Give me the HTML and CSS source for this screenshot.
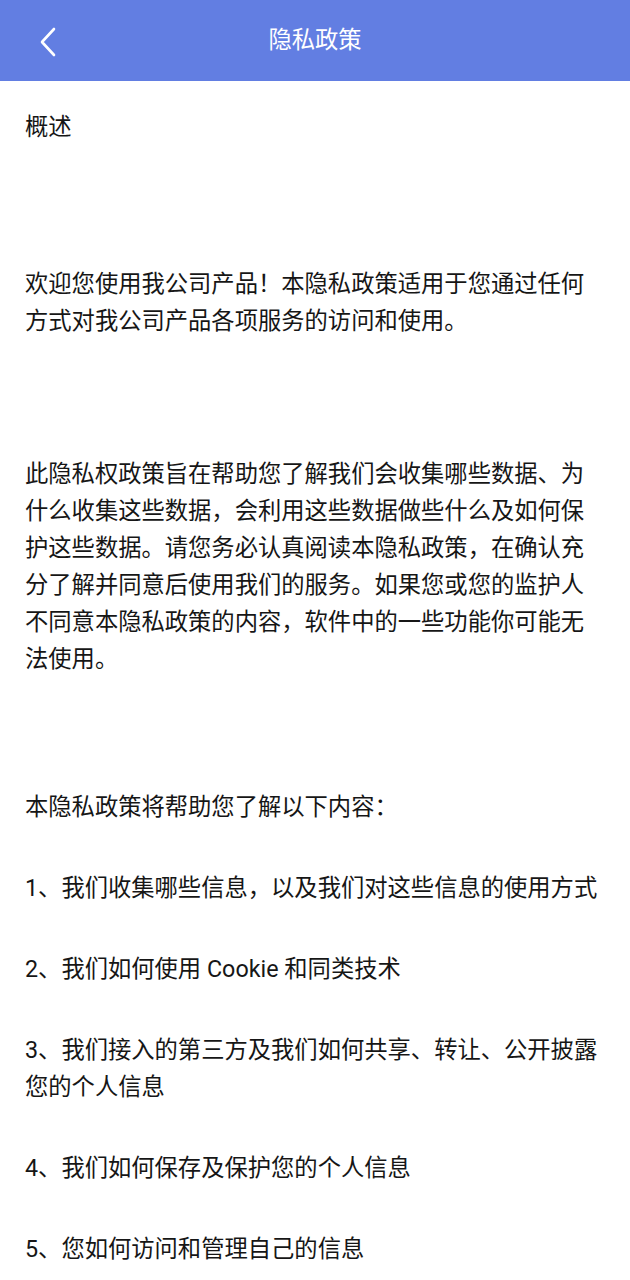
FILE: index.html
```html
<!DOCTYPE html>
<html lang="zh-CN">
<head>
<meta charset="utf-8">
<title>隐私政策</title>
<link rel="stylesheet" href="styles.css">
</head>
<body>
<header class="topbar">
  <span class="back">
    <svg width="20" height="30" viewBox="0 0 20 30"><path d="M16 2 L4 15 L16 28" fill="none" stroke="#ffffff" stroke-width="2.6" stroke-linecap="round" stroke-linejoin="round"/></svg>
  </span>
  <h1 class="title">隐私政策</h1>
</header>
<main class="content">
  <p class="blk">概述</p>
  <p class="blk gap-a">欢迎您使用我公司产品！本隐私政策适用于您通过任何方式对我公司产品各项服务的访问和使用。</p>
  <p class="blk gap-b">此隐私权政策旨在帮助您了解我们会收集哪些数据、为什么收集这些数据，会利用这些数据做些什么及如何保护这些数据。请您务必认真阅读本隐私政策，在确认充分了解并同意后使用我们的服务。如果您或您的监护人不同意本隐私政策的内容，软件中的一些功能你可能无法使用。</p>
  <p class="blk gap-c">本隐私政策将帮助您了解以下内容：</p>
  <p class="blk">1、我们收集哪些信息，以及我们对这些信息的使用方式</p>
  <p class="blk">2、我们如何使用 Cookie 和同类技术</p>
  <p class="blk">3、我们接入的第三方及我们如何共享、转让、公开披露您的个人信息</p>
  <p class="blk">4、我们如何保存及保护您的个人信息</p>
  <p class="blk">5、您如何访问和管理自己的信息</p>
</main>
</body>
</html>
```
FILE: styles.css
```css
html, body {
  margin: 0;
  padding: 0;
  background: #ffffff;
}
body {
  font-family: Roboto, "Noto Sans CJK SC", "Noto Sans", sans-serif;
  color: #161616;
}
.topbar {
  height: 81px;
  background: #627ee2;
  display: flex;
  align-items: center;
  justify-content: center;
  position: relative;
}
.back {
  position: absolute;
  left: 38px;
  top: 27px;
  width: 20px;
  height: 30px;
  display: block;
}
.back svg { display: block; }
.title {
  margin: 0;
  font-size: 23.3px;
  font-weight: normal;
  color: #ffffff;
  line-height: 1;
}
.content {
  padding: 28px 25px 40px 25px;
  font-size: 23.3px;
  line-height: 37px;
}
.blk {
  margin: 44px 0 0 0;
}
.blk:first-child { margin-top: 0; }
.blk.gap-a { margin-top: 120px; }
.blk.gap-b { margin-top: 116px; }
.blk.gap-c { margin-top: 111px; }
```
